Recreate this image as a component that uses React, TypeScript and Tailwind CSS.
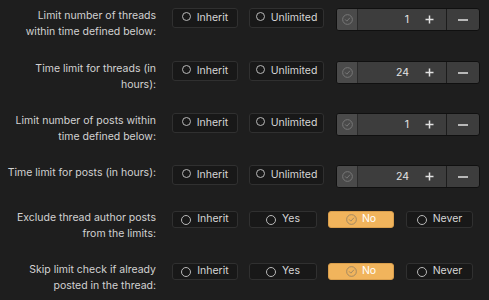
import React from "react";

const font = { fontFamily: "Inter, 'Liberation Sans', Arial, sans-serif" };

function Radio({ label, w, small }: { label: string; w: string; small?: boolean }) {
  return (
    <div
      className={`${w} ${small ? "h-[17px]" : "h-[20px]"} shrink-0 rounded-[3px] border border-[#303030] bg-[#181818] flex items-center justify-center gap-[6px] text-[#d6d6d6]`}
    >
      <span
        className={`${small ? "w-[10px] h-[10px]" : "w-[9px] h-[9px] mb-[4px]"} rounded-full border border-[#b8b8b8] shrink-0`}
      />
      <span className="leading-none">{label}</span>
    </div>
  );
}

function CheckCircle({ color, size }: { color: string; size: number }) {
  return (
    <svg width={size} height={size} viewBox="0 0 12 12" fill="none">
      <circle cx="6" cy="6" r="5.3" stroke={color} strokeWidth="1" />
      <path d="M3.7 6.2 L5.3 7.8 L8.4 4.4" stroke={color} strokeWidth="1" strokeLinecap="round" strokeLinejoin="round" />
    </svg>
  );
}

function Selected({ label }: { label: string }) {
  return (
    <div className="w-[66px] h-[17px] shrink-0 rounded-[3px] border border-[#d99e4c] bg-[#f1b45c] flex items-center justify-center gap-[5px] text-white">
      <CheckCircle color="#9c8562" size={11} />
      <span className="leading-none">{label}</span>
    </div>
  );
}

function Stepper({ value }: { value: string }) {
  return (
    <div className="w-[144px] h-[23px] shrink-0 rounded-[3px] border border-[#101010] bg-[#3d3d3d] flex overflow-hidden">
      <div className="w-[21px] bg-[#4a4a4a] border-r border-[#2a2a2a] flex items-center justify-center">
        <CheckCircle color="#7c7c7c" size={11} />
      </div>
      <div className="flex-1 flex items-center justify-end pr-[4px] text-[#e4e4e4]">{value}</div>
      <div className="w-[33px] flex items-center justify-center">
        <svg width="9" height="9" viewBox="0 0 9 9">
          <path d="M4.5 0.5 V8.5 M0.5 4.5 H8.5" stroke="#e2e2e2" strokeWidth="1.5" />
        </svg>
      </div>
      <div className="w-[33px] border-l border-[#1c1c1c] flex items-center justify-center">
        <svg width="10" height="2" viewBox="0 0 10 2">
          <path d="M0 1 H10" stroke="#e2e2e2" strokeWidth="1.5" />
        </svg>
      </div>
    </div>
  );
}

function Label({ lines }: { lines: string[] }) {
  return (
    <div className="w-[156px] shrink-0 text-right leading-[16px] text-[#d2d2d2]">
      {lines.map((l, i) => (
        <div key={i} className="whitespace-nowrap">
          {l}
        </div>
      ))}
    </div>
  );
}

function NumRow({ lines, value, cls }: { lines: string[]; value: string; cls: string }) {
  return (
    <div className={`flex items-start ${cls}`}>
      <Label lines={lines} />
      <div className="ml-[16px] flex items-start gap-[11px]">
        <Radio label="Inherit" w="w-[66px]" />
        <Radio label="Unlimited" w="w-[75px]" />
        <div className="ml-[1px]">
          <Stepper value={value} />
        </div>
      </div>
    </div>
  );
}

function ChoiceRow({ lines, cls }: { lines: string[]; cls: string }) {
  return (
    <div className={`flex items-start ${cls}`}>
      <Label lines={lines} />
      <div className="ml-[16px] mt-[1px] flex items-start gap-[11px]">
        <Radio label="Inherit" w="w-[66px]" small />
        <Radio label="Yes" w="w-[68px]" small />
        <Selected label="No" />
        <div className="ml-[1px]">
          <Radio label="Never" w="w-[67px]" small />
        </div>
      </div>
    </div>
  );
}

export default function App() {
  return (
    <div className="w-[489px] h-[300px] bg-[#1e1e1e] text-[10.5px] overflow-hidden flex flex-col" style={font}>
      <NumRow lines={["Limit number of threads", "within time defined below:"]} value="1" cls="mt-[8px]" />
      <NumRow lines={["Time limit for threads (in", "hours):"]} value="24" cls="mt-[21px]" />
      <NumRow lines={["Limit number of posts within", "time defined below:"]} value="1" cls="mt-[20px]" />
      <NumRow lines={["Time limit for posts (in hours):"]} value="24" cls="mt-[20px]" />
      <ChoiceRow lines={["Exclude thread author posts", "from the limits:"]} cls="mt-[22px]" />
      <ChoiceRow lines={["Skip limit check if already", "posted in the thread:"]} cls="mt-[20px]" />
    </div>
  );
}
